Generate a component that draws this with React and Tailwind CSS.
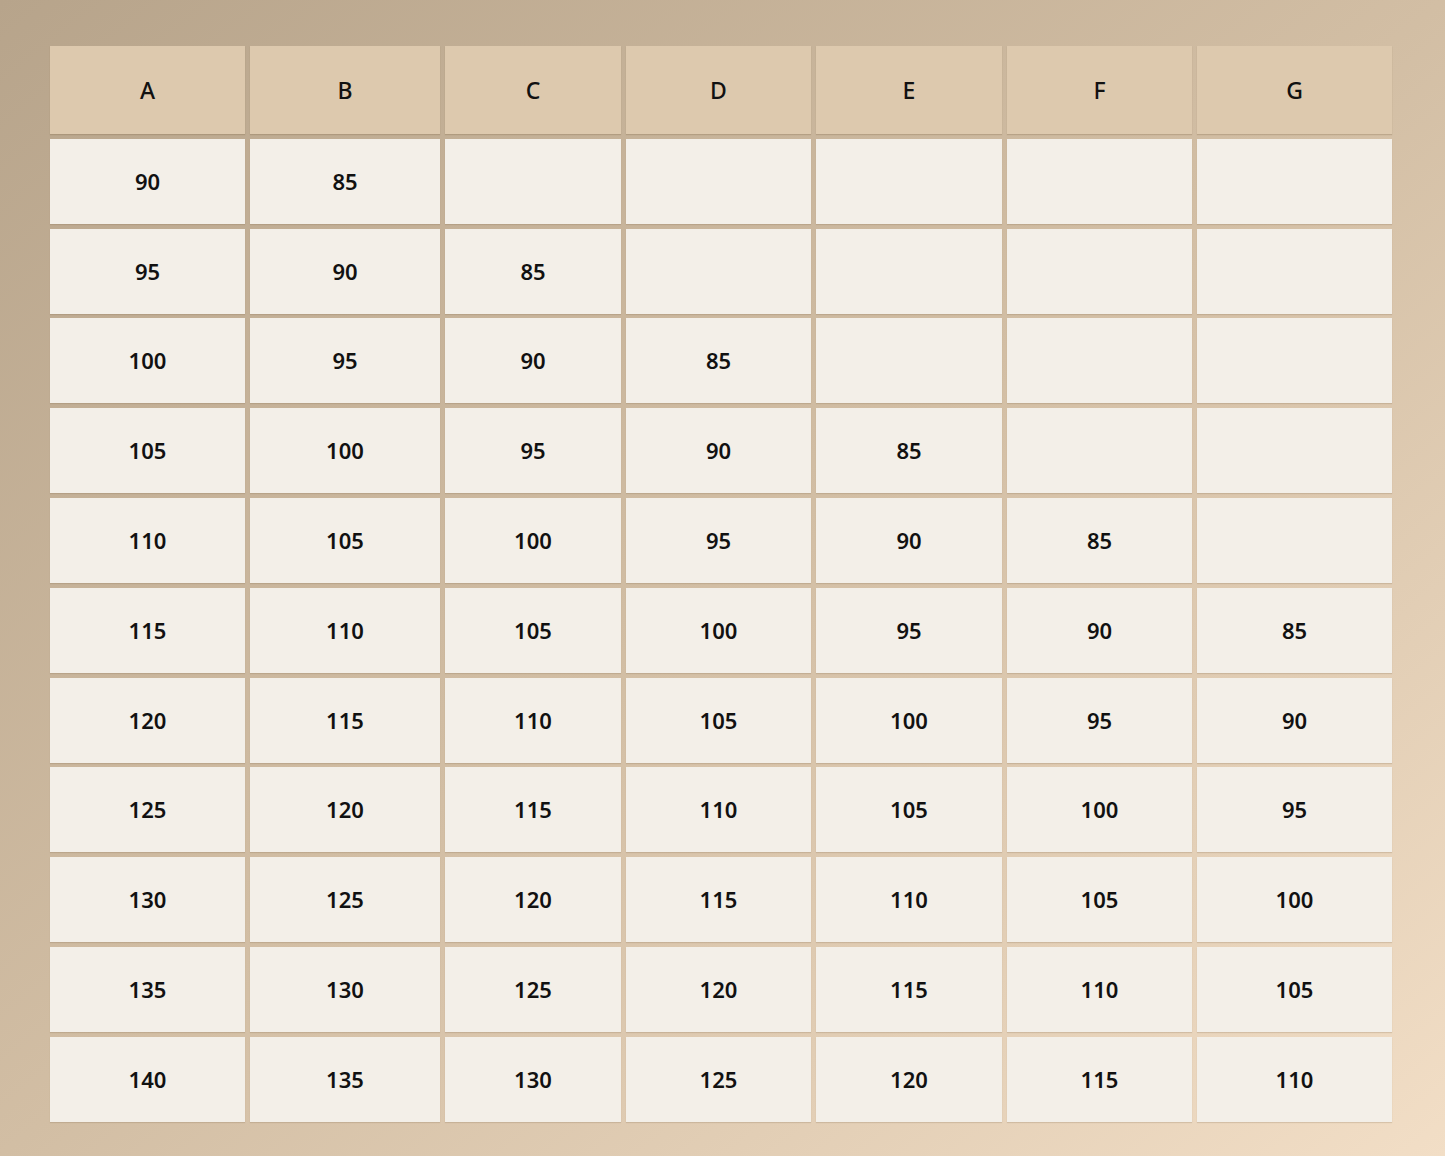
import React from 'react';

const columns = ['A', 'B', 'C', 'D', 'E', 'F', 'G'];

// each row starts at 90 + 5*i in column A, drops 5 per column, stops below 85
const rows = Array.from({ length: 11 }, (_, i) =>
  columns.map((_, j) => {
    const v = 90 + 5 * i - 5 * j;
    return v >= 85 ? v : '';
  })
);

const App = () => {
  return (
    <div
      className="w-[1445px] h-[1156px] bg-gradient-to-br from-[#b7a48b] via-[#d2bea4] to-[#f2dec6] pl-[50px] pt-[46px] overflow-hidden"
      style={{ fontFamily: '"Noto Sans", "Open Sans", sans-serif' }}
    >
      <div className="grid grid-cols-[195px_190px_176px_185px_186px_185px_195px] grid-rows-[88px] auto-rows-[85px] gap-x-[5px] gap-y-[4.8px] w-[1342px]">
        {columns.map((c) => (
          <div
            key={c}
            className="bg-[#ddc9ae] flex items-center justify-center text-[23px] font-medium text-[#111] shadow-[0_1px_1px_rgba(120,95,65,0.25)]"
          >
            {c}
          </div>
        ))}
        {rows.map((row, i) =>
          row.map((v, j) => (
            <div
              key={`${i}-${j}`}
              className="bg-[#f3efe8] flex items-center justify-center text-[22px] font-semibold text-[#111] shadow-[0_1px_1px_rgba(120,95,65,0.2)]"
            >
              {v}
            </div>
          ))
        )}
      </div>
    </div>
  );
};

export default App;
